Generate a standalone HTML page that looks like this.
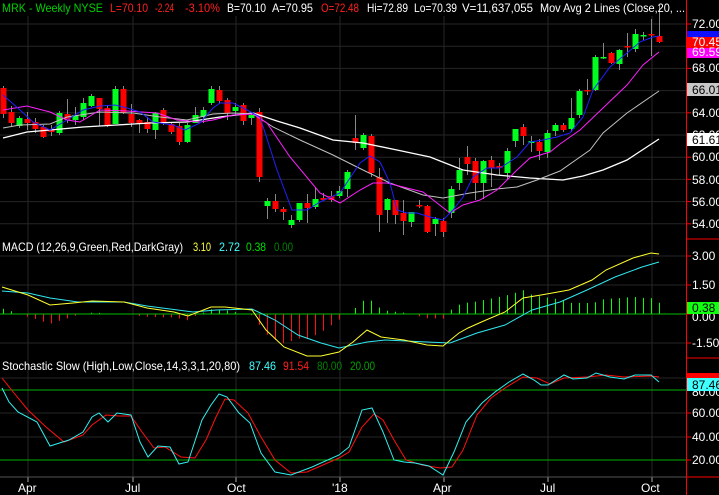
<!DOCTYPE html>
<html><head><meta charset="utf-8"><style>
html,body{margin:0;padding:0;background:#000;width:719px;height:495px;overflow:hidden}
svg{display:block}
text{font-family:"Liberation Sans",Arial,sans-serif;font-size:12px}
</style></head><body>
<svg id="s" width="719" height="495" viewBox="0 0 719 495" xmlns="http://www.w3.org/2000/svg">
<rect width="719" height="495" fill="#000"/>
<g id="grid"></g>
<g id="plot"></g>
<g lengthAdjust="spacingAndGlyphs">
<!-- header -->
<text y="12" fill="#00d000" x="2" textLength="101" lengthAdjust="spacingAndGlyphs">MRK - Weekly  NYSE</text>
<text y="12" fill="#ff2020" x="110" textLength="38" lengthAdjust="spacingAndGlyphs">L=70.10</text>
<text y="12" fill="#ff2020" x="155" textLength="19" lengthAdjust="spacingAndGlyphs">-2.24</text>
<text y="12" fill="#ff2020" x="185" textLength="35" lengthAdjust="spacingAndGlyphs">-3.10%</text>
<text y="12" fill="#fff" x="227" textLength="39" lengthAdjust="spacingAndGlyphs">B=70.10</text>
<text y="12" fill="#fff" x="272" textLength="41" lengthAdjust="spacingAndGlyphs">A=70.95</text>
<text y="12" fill="#ff2020" x="321" textLength="38" lengthAdjust="spacingAndGlyphs">O=72.48</text>
<text y="12" fill="#fff" x="367" textLength="41" lengthAdjust="spacingAndGlyphs">Hi=72.89</text>
<text y="12" fill="#fff" x="414" textLength="43" lengthAdjust="spacingAndGlyphs">Lo=70.39</text>
<text y="12" fill="#fff" x="462" textLength="71" lengthAdjust="spacingAndGlyphs">V=11,637,055</text>
<text y="12" fill="#fff" x="540" textLength="145" lengthAdjust="spacingAndGlyphs">Mov Avg 2 Lines (Close,20, ...</text>
<!-- MACD label -->
<text y="251" fill="#fff" x="2" textLength="181" lengthAdjust="spacingAndGlyphs">MACD (12,26,9,Green,Red,DarkGray)</text>
<text y="251" fill="#ffff40" x="193" textLength="18" lengthAdjust="spacingAndGlyphs">3.10</text>
<text y="251" fill="#40ffff" x="219" textLength="21" lengthAdjust="spacingAndGlyphs">2.72</text>
<text y="251" fill="#00e000" x="246" textLength="20" lengthAdjust="spacingAndGlyphs">0.38</text>
<text y="251" fill="#008000" x="274" textLength="19" lengthAdjust="spacingAndGlyphs">0.00</text>
<!-- Stoch label -->
<text y="370" fill="#fff" x="2" textLength="238" lengthAdjust="spacingAndGlyphs">Stochastic Slow (High,Low,Close,14,3,3,1,20,80)</text>
<text y="370" fill="#40ffff" x="249" textLength="27" lengthAdjust="spacingAndGlyphs">87.46</text>
<text y="370" fill="#ff2020" x="283" textLength="26" lengthAdjust="spacingAndGlyphs">91.54</text>
<text y="370" fill="#008000" x="317" textLength="25" lengthAdjust="spacingAndGlyphs">80.00</text>
<text y="370" fill="#00a000" x="350" textLength="25" lengthAdjust="spacingAndGlyphs">20.00</text>
</g>
<!-- x axis -->
<g fill="#fff">
<text x="18" y="492">Apr</text><text x="125" y="492">Jul</text><text x="227" y="492">Oct</text>
<text x="332" y="492">'18</text><text x="433" y="492">Apr</text><text x="540" y="492">Jul</text><text x="641" y="492">Oct</text>
</g>
<g id="axis"></g>
</svg>
<script>
var S='',G='',A='';
var vx=[28,133,236,340,444,548,652];
vx.forEach(function(x){G+='<line x1="'+x+'" y1="16" x2="'+x+'" y2="477" stroke="#262626"/>';
 G+='<line x1="'+x+'" y1="477" x2="'+x+'" y2="482" stroke="#aaa"/>';});
for(var k=0;k<10;k++){var y=24+22.2*k;G+='<line x1="0" y1="'+y+'" x2="686" y2="'+y+'" stroke="#262626"/>';
 A+='<line x1="686" y1="'+y+'" x2="691" y2="'+y+'" stroke="#f00"/>';}
[256,285,314,343].forEach(function(y){G+='<line x1="0" y1="'+y+'" x2="686" y2="'+y+'" stroke="#262626"/>';A+='<line x1="686" y1="'+y+'" x2="691" y2="'+y+'" stroke="#f00"/>';});
[378,413,437,460].forEach(function(y){G+='<line x1="0" y1="'+y+'" x2="686" y2="'+y+'" stroke="#262626"/>';A+='<line x1="686" y1="'+y+'" x2="691" y2="'+y+'" stroke="#f00"/>';});
G+='<line x1="0" y1="477" x2="686" y2="477" stroke="#555"/>';
document.getElementById('grid').innerHTML=G;
var C=[[3,88,114,86,118,'r'],[11,112,123,106,127,'r'],[19,118,126,116,128,'g'],[27,119,123,112,130,'r'],[35,122,129,118,133,'r'],[43,127,137,125,138,'r'],[51,130,132,125,136,'r'],[59,113,133,111,135,'g'],[67,114,120,99,123,'r'],[75,115,120,107,125,'g'],[83,103,117,98,120,'g'],[91,96,106,94,107,'g'],[99,98,109,98,126,'r'],[107,108,125,105,127,'r'],[115,89,124,86,124,'g'],[123,89,113,86,114,'r'],[131,114,123,104,127,'r'],[139,120,124,119,133,'r'],[147,122,129,117,133,'r'],[155,113,130,112,139,'g'],[163,110,123,108,125,'r'],[171,124,132,122,134,'r'],[179,126,142,123,145,'r'],[187,125,142,123,143,'g'],[195,115,123,107,123,'g'],[203,110,117,107,123,'g'],[211,89,103,86,105,'g'],[219,90,101,86,103,'r'],[227,100,113,98,120,'r'],[235,107,111,103,115,'g'],[243,105,121,103,125,'r'],[251,115,118,113,125,'g'],[259,112,177,108,182,'r'],[267,201,206,198,219,'g'],[275,201,209,194,212,'r'],[283,209,212,207,220,'r'],[291,220,225,215,228,'g'],[299,203,220,203,222,'g'],[307,203,208,194,223,'r'],[315,199,207,187,209,'g'],[323,198,200,193,201,'r'],[331,196,200,191,202,'r'],[339,191,196,186,198,'g'],[347,172,189,170,197,'g'],[355,138,143,115,150,'r'],[363,135,148,133,150,'g'],[371,136,173,134,177,'r'],[379,177,215,168,232,'r'],[387,199,210,198,223,'g'],[395,200,215,200,224,'r'],[403,213,221,200,235,'r'],[411,212,222,212,227,'g'],[419,205,206,200,208,'r'],[427,206,232,205,233,'r'],[435,219,224,217,236,'g'],[443,221,232,218,237,'r'],[451,189,213,186,218,'g'],[459,170,183,158,190,'g'],[467,157,164,146,175,'r'],[475,161,183,158,200,'r'],[483,161,183,160,199,'g'],[491,160,168,156,187,'r'],[499,166,168,163,175,'r'],[507,151,173,148,180,'g'],[515,129,141,129,147,'g'],[523,127,136,124,145,'r'],[531,141,143,136,152,'g'],[539,142,151,139,160,'r'],[547,133,152,130,158,'g'],[555,125,131,123,136,'g'],[563,125,130,123,132,'r'],[571,118,129,98,132,'g'],[579,91,115,89,118,'g'],[587,90,91,79,95,'r'],[595,57,90,55,91,'g'],[603,57,58,43,59,'g'],[611,53,63,52,64,'r'],[619,50,64,49,70,'g'],[627,46,47,33,57,'r'],[635,34,49,29,52,'g'],[643,35,36,32,40,'g'],[651,34,35,19,56,'r'],[659,36,42,5,43,'r']];
C.forEach(function(c){var col=c[5]=='g'?'#00ff20':'#ff0000';
 S+='<line x1="'+c[0]+'.5" y1="'+c[3]+'" x2="'+c[0]+'.5" y2="'+c[4]+'" stroke="#888"/>';
 var h=Math.max(c[2]-c[1],1.5);
 S+='<rect x="'+(c[0]-2.5)+'" y="'+c[1]+'" width="6" height="'+h+'" fill="'+col+'"/>';});
function pl(p,col,w){return '<polyline fill="none" stroke="'+col+'" stroke-width="'+(w||1)+'" points="'+p.map(function(q){return q.join(',')}).join(' ')+'"/>';}
var white=[[3,138],[27,132],[50,130],[83,127],[117,125],[150,123],[187,122],[220,117],[253,113],[277,121],[300,128],[333,140],[363,143],[397,150],[430,157],[463,170],[497,175],[530,178],[563,180],[583,176],[603,170],[627,160],[659,139]];
var gray=[[3,128],[20,125],[50,124],[67,117],[100,112],[133,113],[160,117],[187,120],[213,114],[233,113],[253,114],[273,127],[300,140],[333,155],[363,170],[390,183],[423,195],[443,198],[470,193],[497,189],[517,187],[537,180],[560,171],[590,150],[603,133],[627,113],[659,91]];
var mag=[[3,110],[27,106],[50,112],[67,120],[80,122],[100,110],[127,111],[157,113],[177,120],[200,122],[213,120],[233,115],[253,114],[267,123],[290,157],[320,193],[340,203],[360,190],[373,183],[387,183],[403,187],[423,192],[437,203],[450,213],[463,205],[480,200],[497,190],[517,170],[530,158],[550,152],[560,144],[580,130],[603,108],[627,85],[643,65],[659,52]];
var blue=[[3,95],[20,110],[33,122],[50,130],[67,120],[83,110],[100,106],[115,105],[127,108],[140,112],[153,122],[173,125],[185,130],[200,123],[213,108],[220,103],[233,103],[247,110],[260,117],[277,170],[292,210],[307,210],[320,202],[340,193],[360,163],[370,156],[380,162],[390,183],[397,210],[407,213],[417,213],[430,217],[443,220],[453,210],[463,197],[473,177],[487,168],[500,168],[517,157],[530,142],[543,140],[557,137],[570,133],[583,117],[593,90],[610,67],[627,53],[640,42],[653,37],[659,36]];
S+=pl(white,'#fff',1.3)+pl(gray,'#c0c0c0')+pl(mag,'#ff20ff')+pl(blue,'#2020ff');
var yel=[[2,287],[28,295],[50,305],[73,303],[92,301],[124,302],[147,308],[174,312],[188,316],[211,307],[225,307],[252,310],[266,330],[284,347],[307,356],[321,356],[339,352],[353,342],[367,330],[381,337],[404,340],[427,345],[443,346],[459,333],[468,328],[486,320],[505,312],[523,298],[541,295],[569,290],[592,280],[606,270],[633,258],[651,253],[659,254]];
var cy=[[2,291],[28,293],[50,298],[78,302],[124,302],[147,306],[193,312],[216,310],[252,309],[275,320],[298,335],[321,343],[339,348],[367,342],[385,340],[427,342],[450,343],[477,333],[505,325],[532,310],[560,302],[587,290],[615,277],[642,267],[659,262]];
function ip(a,x){for(var i=0;i<a.length-1;i++){if(x>=a[i][0]&&x<=a[i+1][0]){var t=(x-a[i][0])/(a[i+1][0]-a[i][0]);return a[i][1]+t*(a[i+1][1]-a[i][1]);}}return a[a.length-1][1];}
for(var x=3;x<=659;x+=8){var d=(ip(cy,x)-ip(yel,x))*1.4;if(Math.abs(d)<1)continue;
 S+='<line x1="'+x+'.5" y1="314" x2="'+x+'.5" y2="'+(314-d)+'" stroke="'+(d>0?'#00ff00':'#ff1010')+'"/>';}
S+='<line x1="0" y1="314" x2="686" y2="314" stroke="#00c000"/>';
S+=pl(cy,'#30e8f0')+pl(yel,'#ffff30');
S+='<line x1="0" y1="390" x2="686" y2="390" stroke="#00b000"/><line x1="0" y1="460" x2="686" y2="460" stroke="#00b000"/>';
var sr=[[2,378],[14,393],[28,410],[46,427],[64,442],[83,435],[92,425],[106,415],[119,416],[131,416],[142,432],[154,448],[165,447],[181,457],[195,458],[206,440],[216,417],[225,399],[234,400],[248,413],[261,437],[275,460],[291,473],[307,472],[339,458],[349,452],[362,427],[374,414],[383,420],[394,440],[406,460],[422,465],[440,468],[452,467],[463,450],[477,415],[491,398],[505,388],[523,377],[537,378],[550,384],[564,378],[587,377],[606,375],[624,377],[651,376],[659,377]];
var sc=[[2,388],[9,402],[18,412],[37,422],[50,446],[69,440],[83,432],[92,417],[99,413],[108,422],[117,413],[131,415],[140,442],[148,457],[158,446],[170,447],[179,464],[188,462],[202,420],[211,405],[219,394],[227,397],[239,413],[250,423],[261,453],[275,472],[291,475],[312,467],[339,455],[349,447],[362,410],[372,408],[383,432],[394,460],[404,462],[415,463],[429,466],[443,475],[454,452],[466,422],[482,403],[495,392],[509,382],[523,374],[534,380],[541,385],[548,385],[564,375],[573,379],[587,378],[596,373],[610,377],[624,379],[635,375],[651,375],[659,382]];
S+=pl(sr,'#ff1010')+pl(sc,'#30f0f0');
document.getElementById('plot').innerHTML=S;
A+='<line x1="686.5" y1="0" x2="686.5" y2="495" stroke="#f00"/>';
[239,358,477].forEach(function(y){A+='<line x1="686" y1="'+y+'" x2="719" y2="'+y+'" stroke="#f00"/>';});
function lab(y,t,fg){A+='<text x="692" y="'+(y+4)+'" fill="'+(fg||'#fff')+'">'+t+'</text>';}
function box(y1,y2,bg,t,fg){A+='<rect x="687" y="'+y1+'" width="32" height="'+(y2-y1)+'" fill="'+bg+'"/><text x="692" y="'+(y2-2)+'" fill="'+fg+'">'+t+'</text>';}
lab(24,'72.00');lab(68,'68.00');lab(113,'64.00');lab(157,'60.00');lab(180,'58.00');lab(202,'56.00');lab(224,'54.00');
box(31,38,'#1010ff','','#fff');box(37,48,'#ff0000','70.45','#fff');box(48,58,'#ff00ff','69.59','#fff');
lab(135,'62.00');box(83,96,'#c8c8c8','66.01','#000');box(133,146,'#fff','61.61','#000');
lab(256,'3.00');lab(285,'1.50');lab(343,'-1.50');lab(317,'0.00');box(302,314,'#10ff10','0.38','#000');
lab(413,'60.00');lab(437,'40.00');lab(460,'20.00');lab(392,'80.00');
box(373,378,'#ff0000','','#fff');box(378,391,'#40ffff','87.46','#000');
document.getElementById('axis').innerHTML=A;
</script>
</body></html>
